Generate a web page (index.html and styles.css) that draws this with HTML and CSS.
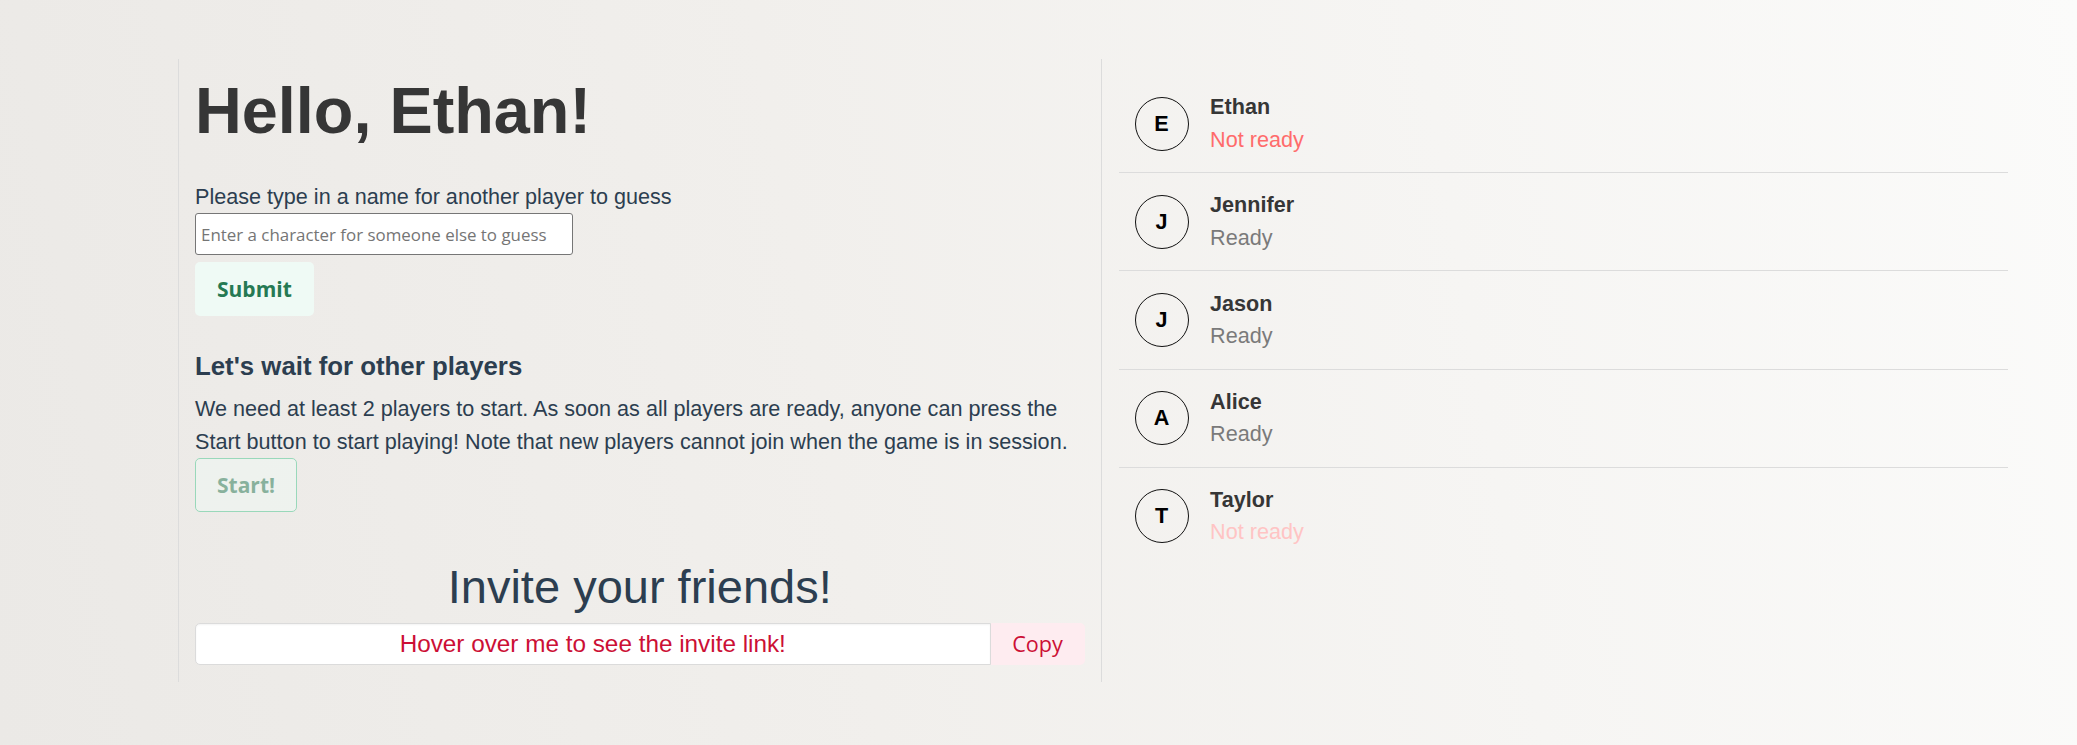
FILE: index.html
```html
<!DOCTYPE html>
<html lang="en">
<head>
<meta charset="utf-8">
<title>Lobby</title>
<link rel="stylesheet" href="styles.css">
</head>
<body>
<div class="layout">
  <section class="col col-main">
    <h1 class="title">Hello, Ethan!</h1>
    <form class="name-form">
      <label class="prompt" for="character">Please type in a name for another player to guess</label>
      <input id="character" class="plain-input" type="text" placeholder="Enter a character for someone else to guess">
      <button type="button" class="btn btn-success">Submit</button>
    </form>
    <div class="waiting">
      <h2 class="subtitle">Let's wait for other players</h2>
      <p class="note">We need at least 2 players to start. As soon as all players are ready, anyone can press the Start button to start playing! Note that new players cannot join when the game is in session.</p>
      <button type="button" class="btn btn-start" disabled>Start!</button>
    </div>
    <div class="invite">
      <h2 class="invite-title">Invite your friends!</h2>
      <div class="addons">
        <input class="link-input" type="text" value="Hover over me to see the invite link!" readonly>
        <button type="button" class="btn btn-copy">Copy</button>
      </div>
    </div>
  </section>
  <section class="col col-players">
    <ul class="players">
      <li class="player"><span class="avatar">E</span><div class="info"><div class="name">Ethan</div><div class="status not-ready">Not ready</div></div></li>
      <li class="player"><span class="avatar">J</span><div class="info"><div class="name">Jennifer</div><div class="status ready">Ready</div></div></li>
      <li class="player"><span class="avatar">J</span><div class="info"><div class="name">Jason</div><div class="status ready">Ready</div></div></li>
      <li class="player"><span class="avatar">A</span><div class="info"><div class="name">Alice</div><div class="status ready">Ready</div></div></li>
      <li class="player"><span class="avatar">T</span><div class="info"><div class="name">Taylor</div><div class="status not-ready faded">Not ready</div></div></li>
    </ul>
  </section>
</div>
</body>
</html>
```

FILE: styles.css
```css
* { box-sizing: border-box; }

html, body {
  margin: 0;
  height: 100%;
}

body {
  background: linear-gradient(80deg, #ebe9e6 0%, #f1efec 40%, #fbfbfa 100%);
  font-family: "Liberation Sans", Arial, sans-serif;
  font-size: 21.6px;
  color: #2c3e50;
}

.layout {
  display: flex;
  width: 1846px;
  margin: 59px 0 0 178px;
}

.col {
  flex: 1 1 0;
  border-left: 1px solid #dcdcdc;
}

.col-main {
  padding: 15px 16px 17px 16px;
}

.col-players {
  padding: 16px 16px 0 17px;
}

.title {
  margin: 0 0 34px;
  font-size: 64.8px;
  line-height: 73px;
  font-weight: 700;
  color: #363636;
}

.name-form {
  margin: 0;
}

.prompt {
  display: block;
  line-height: 32.4px;
}

.plain-input {
  display: block;
  width: 378px;
  height: 42px;
  margin: 0;
  padding: 0 5px;
  border: 1px solid #767676;
  border-radius: 3px;
  background: #fff;
  font-family: "Open Sans", sans-serif;
  font-size: 16.9px;
  color: #222;
}

.plain-input::placeholder {
  color: #757575;
}

.btn {
  display: inline-flex;
  align-items: center;
  justify-content: center;
  height: 54px;
  padding: 0 21px;
  border: 1px solid transparent;
  border-radius: 5px;
  font-family: "Open Sans", sans-serif;
  font-size: 21px;
  line-height: 1;
}

.btn-success {
  margin-top: 7px;
  background: #effaf5;
  color: #257953;
  font-weight: 700;
}

.waiting {
  margin-top: 36px;
}

.subtitle {
  margin: 0 0 12px;
  font-size: 25.8px;
  line-height: 29px;
  font-weight: 700;
  color: #2c3e50;
}

.note {
  margin: 0;
  line-height: 32.4px;
}

.btn-start {
  margin-top: 0;
  background: #effaf5;
  border-color: #48c78e;
  color: #257953;
  font-weight: 700;
  opacity: 0.5;
}

.invite {
  margin-top: 48px;
}

.invite-title {
  margin: 0 0 10px;
  text-align: center;
  font-size: 47px;
  line-height: 53px;
  font-weight: 400;
  color: #2c3e50;
}

.addons {
  display: flex;
}

.link-input {
  flex: 1 1 auto;
  min-width: 0;
  height: 42px;
  margin: 0;
  padding: 0 10px;
  border: 1px solid #dbdbdb;
  border-radius: 5px 0 0 5px;
  box-shadow: inset 0 1px 2px rgba(10, 10, 10, 0.05);
  background: #fff;
  text-align: center;
  font-family: "Liberation Sans", Arial, sans-serif;
  font-size: 24.3px;
  color: #cc0f35;
}

.btn-copy {
  width: 94px;
  height: 42px;
  padding: 0;
  border-radius: 0 5px 5px 0;
  background: #feecf0;
  color: #cc0f35;
  font-weight: 400;
  font-size: 21.6px;
}

.players {
  margin: 0;
  padding: 0;
  list-style: none;
}

.player {
  display: flex;
  align-items: center;
  gap: 21.6px;
  padding: 16.2px 16px;
  border-bottom: 1px solid #dcdcdc;
}

.player:last-child {
  border-bottom: none;
}

.avatar {
  display: flex;
  align-items: center;
  justify-content: center;
  flex: 0 0 54px;
  width: 54px;
  height: 54px;
  border: 1px solid #111;
  border-radius: 50%;
  font-weight: 700;
  font-size: 21.6px;
  color: #000;
}

.name {
  line-height: 32.4px;
  font-weight: 700;
  color: #363636;
}

.status {
  line-height: 32.4px;
}

.ready { color: #7a7a7a; }
.not-ready { color: #ff6b6b; }
.not-ready.faded { color: #ffc4c4; }
```
